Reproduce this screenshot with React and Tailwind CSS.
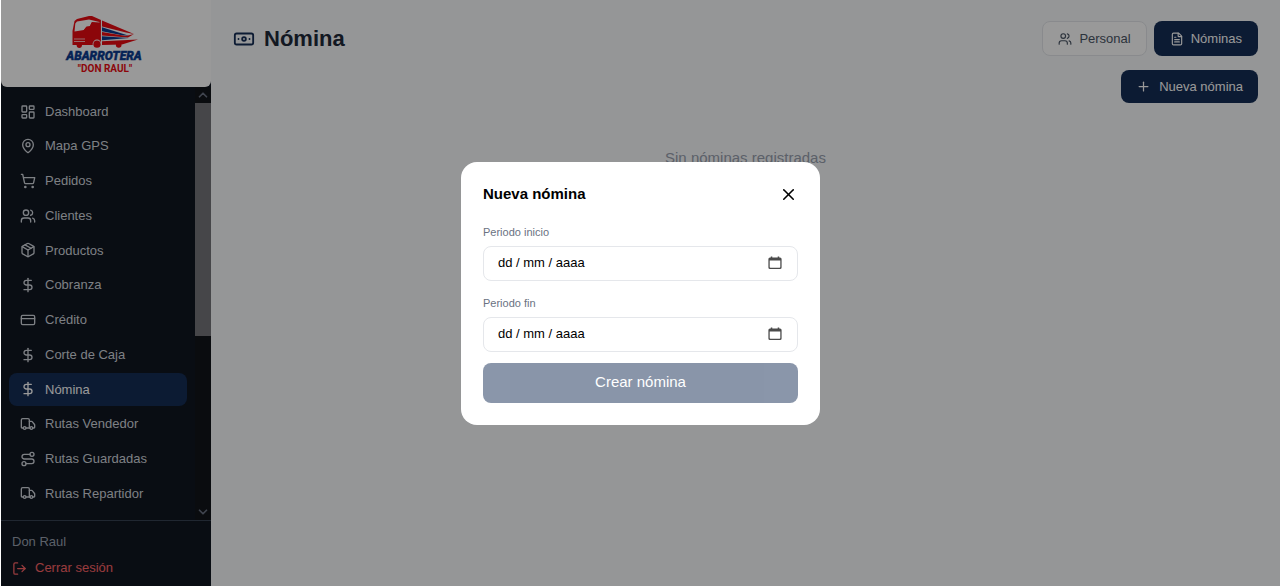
import { useState } from 'react';
import {
  Banknote,
  ChevronDown,
  ChevronUp,
  CreditCard,
  DollarSign,
  FileText,
  LayoutDashboard,
  LogOut,
  MapPin,
  Package,
  Plus,
  Route,
  ShoppingCart,
  Truck,
  Users,
  X,
} from 'lucide-react';

const NAV = [
  { label: 'Dashboard', icon: LayoutDashboard },
  { label: 'Mapa GPS', icon: MapPin },
  { label: 'Pedidos', icon: ShoppingCart },
  { label: 'Clientes', icon: Users },
  { label: 'Productos', icon: Package },
  { label: 'Cobranza', icon: DollarSign },
  { label: 'Crédito', icon: CreditCard },
  { label: 'Corte de Caja', icon: DollarSign },
  { label: 'Nómina', icon: DollarSign, active: true },
  { label: 'Rutas Vendedor', icon: Truck },
  { label: 'Rutas Guardadas', icon: Route },
  { label: 'Rutas Repartidor', icon: Truck },
];

function Logo() {
  return (
    <svg viewBox="0 0 80 60" className="w-20 h-[60px]" role="img" aria-label="Abarrotera Don Raul">
      {/* cab */}
      <path fill="#ea0a12" d="M8.500 17 L10.500 7 L13 5 L25 2 L28 2 L37 6 V31 H8.500 Z" />
      <path fill="#fff" d="M11.300 9.500 L13 7.500 L25 5.500 L35.500 8 V8.600 L28 8 L25.500 13 L22 13.500 L20 16 L10.500 17.500 Z" />
      <path fill="#ea0a12" d="M19 17 L22.500 12.500 L26 12 L27.500 8.500 L36 9.500 V17 Z" />
      <path stroke="#fff" strokeWidth="0.7" d="M10 25 H21 M10 27.500 H21 M37.400 6 V31" fill="none" />
      <circle cx="15.300" cy="31.300" r="2.600" fill="#ea0a12" />
      <circle cx="33" cy="30" r="4.400" fill="#fff" />
      <circle cx="33" cy="30.200" r="3.600" fill="#ea0a12" />
      {/* trailer, in speed stripes */}
      <path fill="#ea0a12" d="M38 6.500 L70 20 L62 18.500 L38 12.500 Z" />
      <path fill="#0a3b8f" d="M38 13.200 L65 21.800 L58 21.300 L38 17.200 Z" />
      <path fill="#ea0a12" d="M38 18 L62 22 L70 20 L64 23.500 L38 21.500 Z" />
      <path fill="#0a3b8f" d="M38 22.300 L65 24 L38 26.300 Z" />
      <path fill="#ea0a12" d="M38 27.200 L74 25.500 L58 30.500 L38 31 Z" />
      <circle cx="54.700" cy="31" r="2.800" fill="#ea0a12" />
      <text x="40" y="46" textAnchor="middle" fontSize="12" fontWeight="900" fontStyle="italic" fill="#0a3b8f" stroke="#0a3b8f" strokeWidth="0.4" fontFamily="Roboto, 'Liberation Sans', sans-serif">
        ABARROTERA
      </text>
      <text x="41" y="58" textAnchor="middle" fontSize="10" fontWeight="700" fill="#ea0a12" fontFamily="Roboto, 'Liberation Sans', sans-serif">
        "DON RAUL"
      </text>
    </svg>
  );
}

function Sidebar() {
  return (
    <aside className="w-[210px] shrink-0 h-full flex flex-col bg-[#0f1621]">
      <div className="h-[87px] shrink-0 pr-1 bg-white rounded-b-md flex items-center justify-center">
        <Logo />
      </div>

      <div className="flex-1 min-h-0 flex">
        <nav className="flex-1 flex flex-col justify-between pt-2 pb-2.5 px-2">
          {NAV.map(({ label, icon: Icon, active }) => (
            <a
              key={label}
              href="#"
              aria-current={active ? 'page' : undefined}
              className={`h-[33px] flex items-center gap-[9px] px-[11px] rounded-lg text-[13px] ${
                active ? 'bg-[#152d55] text-white' : 'text-gray-300'
              }`}
            >
              <Icon size={16} />
              <span>{label}</span>
            </a>
          ))}
        </nav>
        <div className="w-4 flex flex-col items-center justify-between bg-[#111419]" aria-hidden="true">
          <ChevronUp size={14} strokeWidth={3} className="text-gray-500 my-px" />
          <div className="w-full flex-1">
            <div className="h-[58%] bg-[#75757b]" />
          </div>
          <ChevronDown size={14} strokeWidth={3} className="text-gray-500 my-px" />
        </div>
      </div>

      <div className="h-[66px] shrink-0 border-t border-gray-700 px-[11px] pt-3 flex flex-col gap-2 text-[13px] leading-[18px]">
        <p className="text-gray-400">Don Raul</p>
        <button type="button" className="flex items-center gap-2 text-red-400">
          <LogOut size={15} />
          <span>Cerrar sesión</span>
        </button>
      </div>
    </aside>
  );
}

function DateField({ id, label, value, onChange }) {
  return (
    <div className="flex flex-col gap-1.5">
      <label htmlFor={id} className="text-[11px] leading-4 text-gray-500">{label}</label>
      <div className="h-[35px] flex items-center pl-3.5 pr-[15px] border border-gray-200 rounded-lg">
        <input
          id={id}
          type="text"
          placeholder="dd / mm / aaaa"
          value={value}
          onChange={(e) => onChange(e.target.value)}
          className="flex-1 min-w-0 text-[13px] text-black placeholder-black outline-none"
        />
        <svg viewBox="0 0 14 14" className="w-3.5 h-3.5" aria-hidden="true">
          <path
            fill="#4b4b4b"
            fillRule="evenodd"
            d="M2.800 0.500 H4.300 V1.500 H9.700 V0.500 H11.200 V1.500 H12 A1.600 1.600 0 0 1 13.600 3.100 V11.400 A1.600 1.600 0 0 1 12 13 H2 A1.600 1.600 0 0 1 0.400 11.400 V3.100 A1.600 1.600 0 0 1 2 1.500 H2.800 Z M1.700 4.500 V11 A0.700 0.700 0 0 0 2.400 11.700 H11.600 A0.700 0.700 0 0 0 12.300 11 V4.500 Z"
          />
        </svg>
      </div>
    </div>
  );
}

function NuevaNominaModal({ onClose }) {
  const [inicio, setInicio] = useState('');
  const [fin, setFin] = useState('');

  return (
    <div className="fixed inset-y-0 right-0 left-px bg-black/40 flex items-center justify-center">
      <div role="dialog" aria-labelledby="modal-title" className="w-[359px] bg-white rounded-2xl p-[22px]">
        <div className="h-[22px] mb-[18px] flex items-center justify-between">
          <h2 id="modal-title" className="text-[15px] font-bold text-black">Nueva nómina</h2>
          <button type="button" aria-label="Cerrar" onClick={onClose}>
            <X size={19} />
          </button>
        </div>
        <div className="flex flex-col gap-3.5">
          <DateField id="periodo-inicio" label="Periodo inicio" value={inicio} onChange={setInicio} />
          <DateField id="periodo-fin" label="Periodo fin" value={fin} onChange={setFin} />
        </div>
        <button
          type="button"
          disabled={!inicio || !fin}
          className="mt-[11px] w-full h-10 rounded-lg bg-[#152d55] disabled:opacity-50 text-white text-[15px]"
        >
          Crear nómina
        </button>
      </div>
    </div>
  );
}

export default function App() {
  const [open, setOpen] = useState(true);

  return (
    <div className="h-screen flex border-l border-white bg-slate-50 font-['Liberation_Sans',Arial,sans-serif]">
      <Sidebar />

      <main className="flex-1 min-w-0 px-[22px] py-[21px]">
        <div className="flex items-center justify-between">
          <h1 className="flex items-center gap-[9px] text-[22px] font-bold text-gray-800">
            <Banknote size={22} className="text-[#152d55]" />
            Nómina
          </h1>
          <div className="flex gap-[7px] text-[13px]">
            <button type="button" className="h-[35px] px-[15px] flex items-center gap-[7px] rounded-lg border border-gray-200 bg-white text-gray-600">
              <Users size={14} />
              Personal
            </button>
            <button type="button" className="h-[35px] px-4 flex items-center gap-[7px] rounded-lg bg-[#152d55] text-white">
              <FileText size={14} />
              Nóminas
            </button>
          </div>
        </div>

        <div className="mt-3.5 flex justify-end">
          <button
            type="button"
            onClick={() => setOpen(true)}
            className="h-[33px] px-[15px] flex items-center gap-2 rounded-lg bg-[#152d55] text-white text-[13px]"
          >
            <Plus size={15} />
            Nueva nómina
          </button>
        </div>

        <p className="mt-11 text-center text-[15px] text-gray-400">Sin nóminas registradas</p>
      </main>

      {open && <NuevaNominaModal onClose={() => setOpen(false)} />}
    </div>
  );
}
